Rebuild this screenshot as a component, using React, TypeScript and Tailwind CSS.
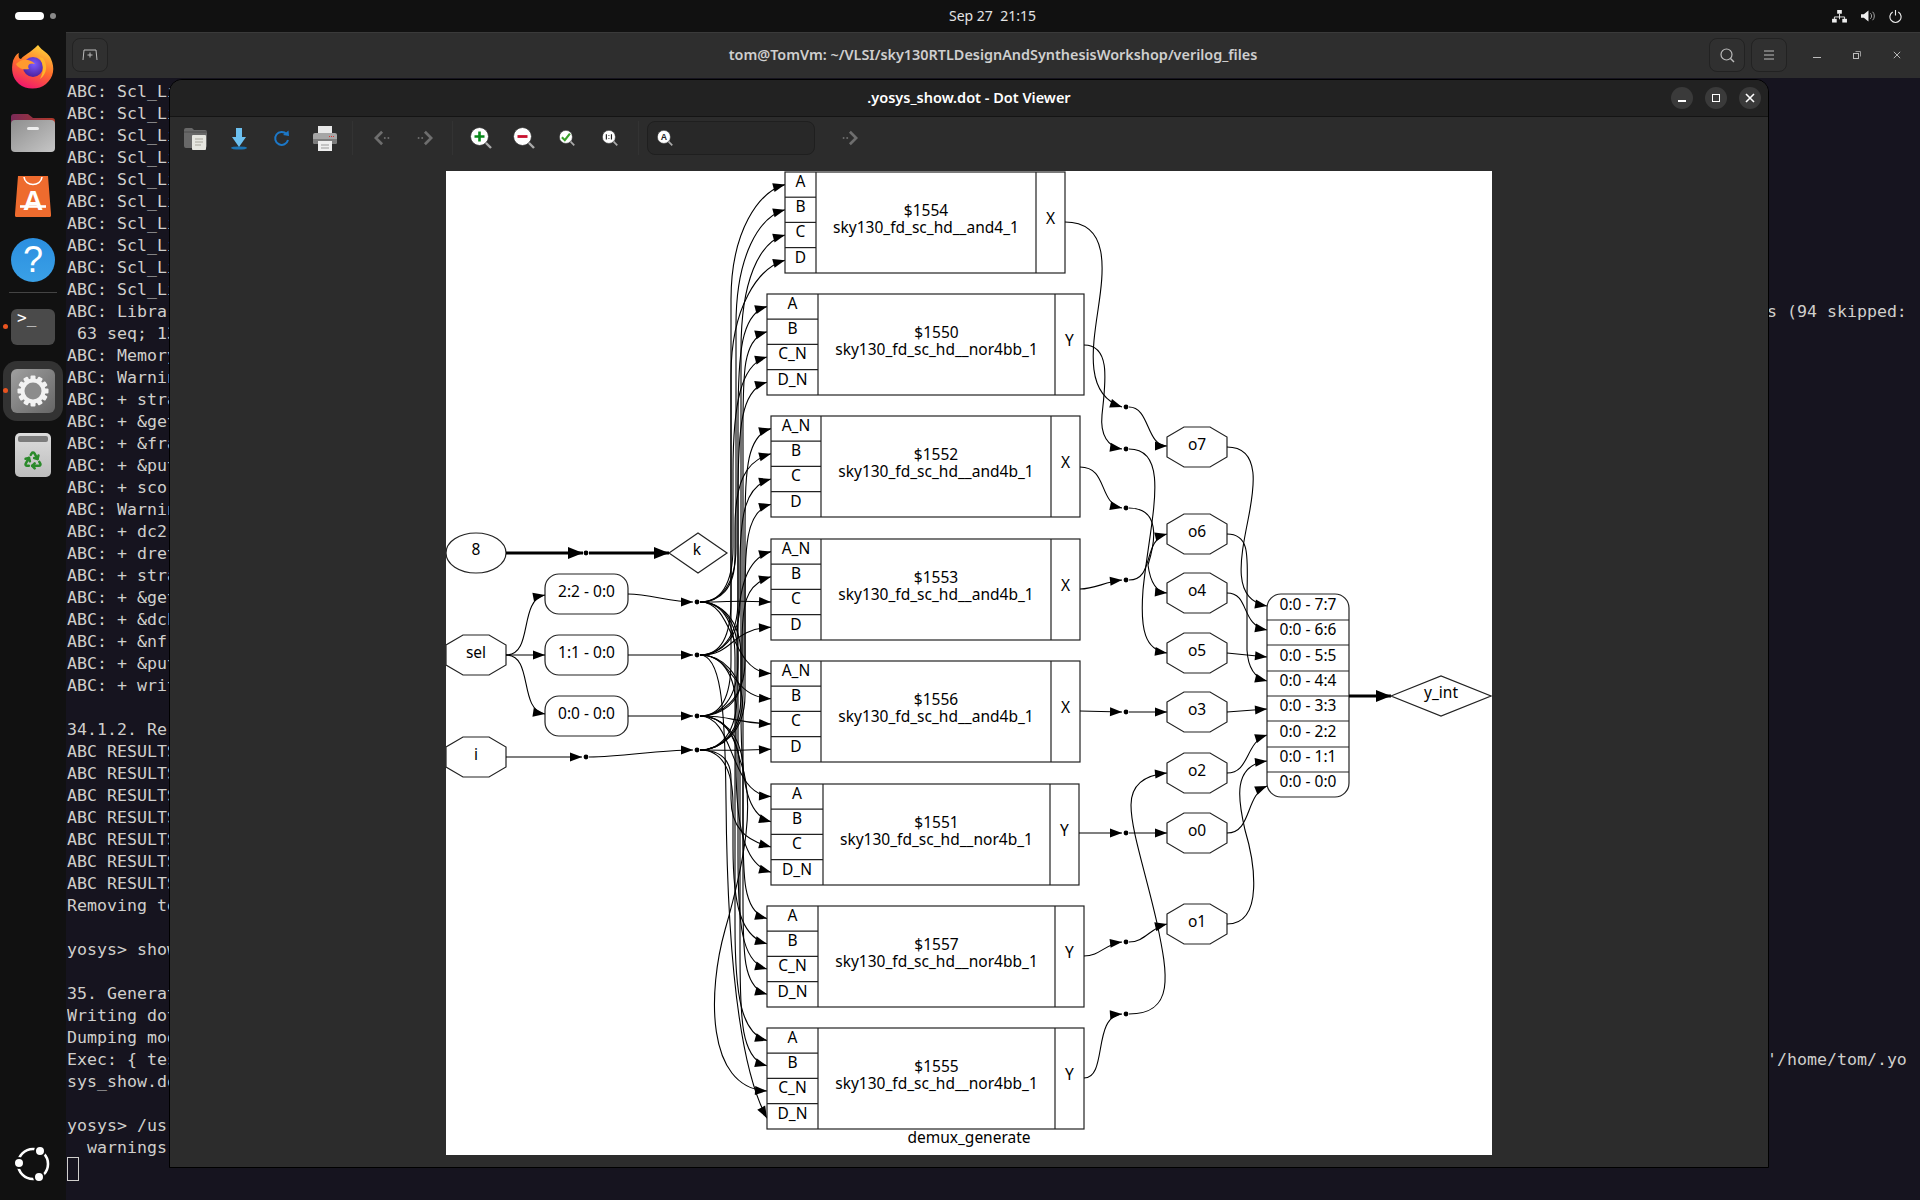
import React from 'react';
import { Recycle } from 'lucide-react';

const mono = { fontFamily: '"DejaVu Sans Mono", monospace' };

// only the part of each line that shows left of the viewer window
const rows = [
  ...Array(10).fill("ABC: Scl_Li"),
  "ABC: Librar",
  " 63 seq; 13",
  "ABC: Memory",
  "ABC: Warnin",
  "ABC: + stra",
  "ABC: + &get",
  "ABC: + &fra",
  "ABC: + &put",
  "ABC: + scor",
  "ABC: Warnin",
  "ABC: + dc2",
  "ABC: + dret",
  "ABC: + stra",
  "ABC: + &get",
  "ABC: + &dch",
  "ABC: + &nf",
  "ABC: + &put",
  "ABC: + writ",
  "",
  "34.1.2. Re-",
  "ABC RESULTS",
  "ABC RESULTS",
  "ABC RESULTS",
  "ABC RESULTS",
  "ABC RESULTS",
  "ABC RESULTS",
  "ABC RESULTS",
  "Removing te",
  "",
  "yosys> show",
  "",
  "35. Generat",
  "Writing dot",
  "Dumping mod",
  "Exec: { tes",
  "sys_show.do",
  "",
  "yosys> /usr",
  "  warnings.",
];

// tails of the long lines, right of the viewer window
const tails: Record<number, string> = {
  10: "s (94 skipped:",
  44: "'/home/tom/.yo",
};

type Box = { id: string; cell: string; x0: number; x1: number; x2: number; x3: number; top: number; ports: string[]; out: string; src: number[] };

const boxes: Box[] = [
  { id: "$1554", cell: "sky130_fd_sc_hd__and4_1", x0: 785, x1: 816, x2: 1036, x3: 1065, top: 172, ports: ["A", "B", "C", "D"], out: "X", src: [1, 0, 3, 2] },
  { id: "$1550", cell: "sky130_fd_sc_hd__nor4bb_1", x0: 767, x1: 818, x2: 1055, x3: 1084, top: 294, ports: ["A", "B", "C_N", "D_N"], out: "Y", src: [2, 3, 0, 1] },
  { id: "$1552", cell: "sky130_fd_sc_hd__and4b_1", x0: 771, x1: 821, x2: 1051, x3: 1080, top: 416, ports: ["A_N", "B", "C", "D"], out: "X", src: [3, 0, 1, 2] },
  { id: "$1553", cell: "sky130_fd_sc_hd__and4b_1", x0: 771, x1: 821, x2: 1051, x3: 1080, top: 539, ports: ["A_N", "B", "C", "D"], out: "X", src: [3, 2, 0, 1] },
  { id: "$1556", cell: "sky130_fd_sc_hd__and4b_1", x0: 771, x1: 821, x2: 1051, x3: 1080, top: 661, ports: ["A_N", "B", "C", "D"], out: "X", src: [0, 1, 2, 3] },
  { id: "$1551", cell: "sky130_fd_sc_hd__nor4b_1", x0: 771, x1: 823, x2: 1050, x3: 1079, top: 784, ports: ["A", "B", "C", "D_N"], out: "Y", src: [2, 0, 3, 1] },
  { id: "$1557", cell: "sky130_fd_sc_hd__nor4bb_1", x0: 767, x1: 818, x2: 1055, x3: 1084, top: 906, ports: ["A", "B", "C_N", "D_N"], out: "Y", src: [1, 3, 0, 2] },
  { id: "$1555", cell: "sky130_fd_sc_hd__nor4bb_1", x0: 767, x1: 818, x2: 1055, x3: 1084, top: 1028, ports: ["A", "B", "C_N", "D_N"], out: "Y", src: [0, 2, 1, 3] },
];

const dots = [602, 655, 716, 750];

// route from a fan-out dot through the vertical bundle to a port
function busPath(sy: number, tx: number, ty: number, cx: number) {
  const d = ty - sy;
  const dir = d < 0 ? -1 : 1;
  if (Math.abs(d) < 90) return `M700,${sy} C735,${sy} ${tx - 42},${ty - dir * 2} ${tx},${ty}`;
  const h = Math.min(115, Math.abs(d) * 0.5);
  const s = Math.min(55, Math.abs(d) * 0.3);
  return `M700,${sy} C720,${sy} ${cx},${sy + dir * s * 0.3} ${cx},${sy + dir * s} L${cx},${ty - dir * h} C${cx},${ty - dir * h * 0.4} ${tx - 26},${ty - dir * 7} ${tx},${ty}`;
}

const Edge = ({ d, w = 1.1 }: { d: string; w?: number }) => {
  const n = d.match(/-?[\d.]+/g)!.map(Number);
  const [px, py, x, y] = n.slice(-4);
  const len = Math.hypot(x - px, y - py) || 1;
  const ux = (x - px) / len;
  const uy = (y - py) / len;
  const L = w > 2 ? 15 : 12;
  const W = w > 2 ? 6 : 4.5;
  const bx = x - ux * L;
  const by = y - uy * L;
  return (
    <g>
      <path d={d} fill="none" stroke="#000" strokeWidth={w} />
      <polygon points={`${x},${y} ${bx - uy * W},${by + ux * W} ${bx + uy * W},${by - ux * W}`} fill="#000" />
    </g>
  );
};

const Octagon = ({ x, cy, label }: { x: number; cy: number; label: string }) => (
  <g>
    <polygon
      points={`${x},${cy - 10} ${x + 17},${cy - 20} ${x + 43},${cy - 20} ${x + 60},${cy - 10} ${x + 60},${cy + 10} ${x + 43},${cy + 20} ${x + 17},${cy + 20} ${x},${cy + 10}`}
      fill="#fff"
      stroke="#222"
      strokeWidth="1.2"
    />
    <text x={x + 30} y={cy + 2.5} textAnchor="middle">{label}</text>
  </g>
);

const Rounded = ({ cy, label }: { cy: number; label: string }) => (
  <g>
    <rect x="545" y={cy - 20} width="83" height="40" rx="14" fill="#fff" stroke="#222" strokeWidth="1.2" />
    <text x="586.5" y={cy + 2.5} textAnchor="middle">{label}</text>
  </g>
);

const Dot = ({ x, y }: { x: number; y: number }) => <circle cx={x} cy={y} r="2.4" fill="#000" />;

const recLabels = ["0:0 - 7:7", "0:0 - 6:6", "0:0 - 5:5", "0:0 - 4:4", "0:0 - 3:3", "0:0 - 2:2", "0:0 - 1:1", "0:0 - 0:0"];
const recLines = [620, 645, 671, 696, 721, 747, 772];

const Graph = () => (
  <svg viewBox="446 171 1046 984" className="block w-[1046px] h-[984px]" style={{ fontFamily: '"Noto Sans", sans-serif', fontSize: 15.5 }}>
    {/* left inputs */}
    <ellipse cx="476" cy="553" rx="30" ry="20" fill="#fff" stroke="#222" strokeWidth="1.2" />
    <text x="476" y="554.5" textAnchor="middle">8</text>
    <polygon points="669,553 698,533 727,553 698,573" fill="#fff" stroke="#222" strokeWidth="1.2" />
    <text x="697" y="554.5" textAnchor="middle">k</text>
    <Edge d="M506,553 L583,553" w={3.2} />
    <Edge d="M589,553 L669,553" w={3.2} />
    <Dot x={586} y={553} />
    <Octagon x={446} cy={655} label="sel" />
    <Octagon x={446} cy={757} label="i" />
    <Rounded cy={594} label="2:2 - 0:0" />
    <Rounded cy={655} label="1:1 - 0:0" />
    <Rounded cy={716} label="0:0 - 0:0" />
    <Edge d="M506,655 C534,655 518,600 545,595" />
    <Edge d="M506,655 L545,655" />
    <Edge d="M506,655 C534,655 518,710 545,714" />
    <Edge d="M628,594 C650,594 670,602 693,602" />
    <Edge d="M628,655 L693,655" />
    <Edge d="M628,716 L693,716" />
    <Edge d="M506,757 L582,757" />
    <Dot x={586} y={757} />
    <Edge d="M589,757 C625,757 655,750 693,750" />
    {dots.map((y) => <Dot key={y} x={697} y={y} />)}

    {/* fan-out bundle */}
    {boxes.map((b, i) =>
      b.ports.map((p, j) => {
        const ty = b.top + 12.6 + j * 25.2;
        const cx = 731 + ((i * 7 + j * 5) % 15);
        if (b.id === "$1555" && p === "C_N")
          return <Edge key={p + i} d={`M700,716 C722,716 733,730 740,760 C756,800 745,860 725,930 C708,990 705,1088 767,${ty}`} />;
        if (b.id === "$1555" && p === "D_N")
          return <Edge key={p + i} d={`M700,655 C720,655 725,700 726,800 C727,920 735,1060 767,${ty + 2}`} />;
        return <Edge key={p + i} d={busPath(dots[b.src[j]], b.x0, ty, cx)} />;
      })
    )}

    {/* cells */}
    {boxes.map((b) => (
      <g key={b.id}>
        <rect x={b.x0} y={b.top} width={b.x3 - b.x0} height={101} fill="#fff" stroke="#222" strokeWidth="1.2" />
        <path d={`M${b.x1},${b.top} V${b.top + 101} M${b.x2},${b.top} V${b.top + 101}`} stroke="#222" strokeWidth="1.2" />
        {[1, 2, 3].map((k) => (
          <path key={k} d={`M${b.x0},${b.top + k * 25.2} H${b.x1}`} stroke="#222" strokeWidth="1.2" />
        ))}
        {b.ports.map((p, j) => (
          <text key={p} x={(b.x0 + b.x1) / 2} y={b.top + 15 + j * 25.2} textAnchor="middle">{p}</text>
        ))}
        <text x={(b.x1 + b.x2) / 2} y={b.top + 44} textAnchor="middle">{b.id}</text>
        <text x={(b.x1 + b.x2) / 2} y={b.top + 61} textAnchor="middle">{b.cell}</text>
        <text x={(b.x2 + b.x3) / 2} y={b.top + 52} textAnchor="middle">{b.out}</text>
      </g>
    ))}
    <text x="969" y="1143" textAnchor="middle">demux_generate</text>

    {/* outputs of the cells */}
    <Edge d="M1065,222 C1110,222 1104,270 1098,310 C1092,350 1085,395 1122,407" />
    <Edge d="M1084,345 C1112,345 1105,385 1102,415 C1100,435 1108,447 1122,449" />
    <Edge d="M1080,467 C1108,467 1098,503 1122,508" />
    <Edge d="M1080,589 C1095,589 1104,582 1122,580" />
    <Edge d="M1080,711 L1122,712" />
    <Edge d="M1079,833 L1122,833" />
    <Edge d="M1084,956 C1100,956 1105,944 1122,942" />
    <Edge d="M1084,1078 C1108,1078 1092,1016 1122,1014" />
    {[407, 449, 508, 580, 712, 833, 942, 1014].map((y) => <Dot key={y} x={1126} y={y} />)}
    <Edge d="M1129,407 C1150,407 1146,446 1167,446" />
    <Edge d="M1129,449 C1172,449 1150,520 1143,590 C1140,630 1145,650 1167,653" />
    <Edge d="M1129,508 C1160,508 1156,540 1148,565 C1150,580 1155,592 1167,593" />
    <Edge d="M1129,580 C1155,580 1142,540 1167,534" />
    <Edge d="M1129,712 L1167,712" />
    <Edge d="M1129,833 L1167,833" />
    <Edge d="M1129,942 C1145,942 1150,928 1167,924" />
    <Edge d="M1129,1014 C1175,1014 1168,975 1157,923 C1145,870 1131,830 1131,805 C1131,785 1145,775 1167,773" />
    <Octagon x={1167} cy={447} label="o7" />
    <Octagon x={1167} cy={534} label="o6" />
    <Octagon x={1167} cy={593} label="o4" />
    <Octagon x={1167} cy={653} label="o5" />
    <Octagon x={1167} cy={712} label="o3" />
    <Octagon x={1167} cy={773} label="o2" />
    <Octagon x={1167} cy={833} label="o0" />
    <Octagon x={1167} cy={924} label="o1" />

    {/* into the output record */}
    <Edge d="M1227,447 C1262,447 1254,490 1248,520 C1240,560 1232,600 1267,606" />
    <Edge d="M1227,593 C1250,593 1240,625 1267,630" />
    <Edge d="M1227,534 C1252,534 1247,560 1247,600 L1247,650 C1248,668 1255,678 1267,681" />
    <Edge d="M1227,653 L1267,657" />
    <Edge d="M1227,712 L1267,709" />
    <Edge d="M1227,773 C1250,773 1245,742 1267,735" />
    <Edge d="M1227,833 C1252,833 1245,795 1267,786" />
    <Edge d="M1227,924 C1265,924 1254,860 1245,830 C1238,800 1232,765 1267,761" />
    <rect x="1267" y="594" width="82" height="203" rx="14" fill="#fff" stroke="#222" strokeWidth="1.2" />
    {recLines.map((y) => <path key={y} d={`M1267,${y} H1349`} stroke="#222" strokeWidth="1.2" />)}
    {recLabels.map((t, i) => (
      <text key={t} x="1308" y={610 + i * 25.35} textAnchor="middle">{t}</text>
    ))}
    <Edge d="M1349,696 L1391,696" w={3.2} />
    <polygon points="1391,696 1441,676 1491,696 1441,716" fill="#fff" stroke="#222" strokeWidth="1.2" />
    <text x="1441" y="698" textAnchor="middle">y_int</text>
  </svg>
);

const Firefox = () => (
  <svg width="44" height="46" viewBox="0 0 44 46">
    <defs>
      <linearGradient id="ffa" x1="0.7" y1="0" x2="0.3" y2="1">
        <stop offset="0" stopColor="#ffd43a" />
        <stop offset="0.5" stopColor="#ff6f2c" />
        <stop offset="1" stopColor="#f0136f" />
      </linearGradient>
      <radialGradient id="ffb" cx="0.55" cy="0.35" r="0.7">
        <stop offset="0" stopColor="#7b5bff" />
        <stop offset="1" stopColor="#4a1d96" />
      </radialGradient>
    </defs>
    <path d="M27 1 C31 7 38 9 40 15 C44 24 43 33 35 40 C28 46 15 46 8 40 C1 34 0 25 2 17 C3 14 5 10 8 9 C7 12 8 15 10 15 C13 11 19 9 27 1Z" fill="url(#ffa)" />
    <circle cx="22" cy="23" r="10" fill="url(#ffb)" />
    <path d="M5 20 C10 15 18 14 24 20 C18 18 16 22 18 25 C11 26 7 24 5 20Z" fill="#ff9a2e" />
    <path d="M32 14 C37 21 36 30 29 35 C33 28 33 20 28 13Z" fill="#ffb52c" />
  </svg>
);

const FilesIcon = () => (
  <svg width="46" height="42" viewBox="0 0 46 42">
    <defs>
      <linearGradient id="fold" x1="0" y1="0" x2="1" y2="1">
        <stop offset="0" stopColor="#8e8e8e" />
        <stop offset="1" stopColor="#c6c6c6" />
      </linearGradient>
      <linearGradient id="tab" x1="0" y1="0" x2="1" y2="0">
        <stop offset="0" stopColor="#7a2a58" />
        <stop offset="1" stopColor="#b23a2a" />
      </linearGradient>
    </defs>
    <path d="M1 6 a3 3 0 0 1 3-3 h14 l5 4 h19 a3 3 0 0 1 3 3 v10 h-44z" fill="url(#tab)" />
    <rect x="1" y="9" width="44" height="32" rx="4" fill="url(#fold)" />
    <rect x="17" y="16" width="12" height="3" rx="1.5" fill="#eee" />
  </svg>
);

const StoreIcon = () => (
  <svg width="36" height="42" viewBox="0 0 36 42">
    <path d="M3 1 H33 L36 39 a2 2 0 0 1-2 3 H2 a2 2 0 0 1-2-3Z" fill="#ee6b2e" />
    <path d="M9 2 C10 12 26 12 27 2" fill="none" stroke="#fff" strokeWidth="1.6" />
    <text x="18" y="35" textAnchor="middle" fill="#fff" fontSize="28" fontWeight="700" fontFamily='"Liberation Sans", sans-serif'>A</text>
    <path d="M5 31.5 H31" stroke="#fff" strokeWidth="2.6" />
  </svg>
);

const HelpIcon = () => (
  <div className="w-[44px] h-[44px] rounded-full bg-gradient-to-b from-[#2b8fe0] to-[#3aa0e6] flex items-center justify-center text-white text-[36px] leading-none" style={{ fontFamily: '"Liberation Sans", sans-serif' }}>
    ?
  </div>
);

const GearIcon = () => (
  <svg width="32" height="32" viewBox="0 0 32 32">
    {Array.from({ length: 12 }).map((_, i) => (
      <rect key={i} x="13.5" y="0.5" width="5" height="6" rx="1" fill="#f2f2f2" transform={`rotate(${i * 30} 16 16)`} />
    ))}
    <circle cx="16" cy="16" r="12.5" fill="#f2f2f2" />
    <circle cx="16" cy="16" r="8.5" fill="#8c8c8c" />
  </svg>
);

const UbuntuLogo = () => (
  <svg width="38" height="38" viewBox="0 0 38 38">
    <circle cx="19" cy="19" r="15" fill="none" stroke="#fff" strokeWidth="2.6" />
    <circle cx="5" cy="18" r="5" fill="#fff" stroke="#111" strokeWidth="2" />
    <circle cx="26" cy="6" r="5" fill="#fff" stroke="#111" strokeWidth="2" />
    <circle cx="25" cy="32" r="5" fill="#fff" stroke="#111" strokeWidth="2" />
  </svg>
);

const Dock = () => (
  <div className="relative w-[66px] shrink-0 bg-[#111111] flex flex-col items-center pt-[12px]">
    <Firefox />
    <div className="mt-[21px]"><FilesIcon /></div>
    <div className="mt-[22px]"><StoreIcon /></div>
    <div className="mt-[21px]"><HelpIcon /></div>
    <div className="mt-[10px] w-[48px] h-px bg-[#444444]" />
    <div className="mt-[16px] w-[44px] h-[36px] rounded-[6px] bg-[#4a4a4a] text-white text-[16px] leading-[16px] pl-[6px] pt-[1px]" style={mono}>
      &gt;_
    </div>
    <div className="mt-[16px] w-[60px] h-[60px] rounded-[14px] bg-[#333333] flex items-center justify-center">
      <div className="w-[44px] h-[44px] rounded-[6px] bg-gradient-to-br from-[#a0a0a0] to-[#666666] flex items-center justify-center">
        <GearIcon />
      </div>
    </div>
    <div className="mt-[12px] w-[36px] h-[44px] rounded-[5px] bg-gradient-to-b from-[#dddddd] to-[#bdbdbd] pt-[3px] px-[3px]">
      <div className="h-[6px] rounded-[2px] bg-[#7c7c7c]" />
      <div className="flex justify-center mt-[8px]"><Recycle size={20} color="#2a8a2a" strokeWidth={3} /></div>
    </div>
    <div className="absolute left-[3px] top-[292px] w-[5px] h-[5px] rounded-full bg-[#e95420]" />
    <div className="absolute left-[3px] top-[356px] w-[5px] h-[5px] rounded-full bg-[#e95420]" />
    <div className="mt-auto mb-[17px]"><UbuntuLogo /></div>
  </div>
);

const HeaderButton = ({ children }: { children: React.ReactNode }) => (
  <div className="w-[36px] h-[34px] rounded-[8px] border border-[#222222] bg-[#303030] flex items-center justify-center">{children}</div>
);

const ToolButton = ({ children }: { children: React.ReactNode }) => (
  <div className="w-[43px] h-[34px] flex items-center justify-center">{children}</div>
);

const Sep = ({ ml }: { ml: string }) => <div className={`${ml} w-px h-[34px] bg-[#333333]`} />;

const Glass = ({ size, children }: { size: number; children: React.ReactNode }) => (
  <svg width={size} height={size} viewBox="0 0 22 22">
    <path d="M15 15 L21 21" stroke="#aaa" strokeWidth="2.4" />
    <circle cx="9.5" cy="9.5" r="9" fill="#fff" stroke="#333" strokeWidth="0.8" />
    {children}
  </svg>
);

const Arrow = ({ dir }: { dir: 'l' | 'r' }) => (
  <svg width="18" height="18" viewBox="0 0 20 18">
    {dir === 'l' ? (
      <g fill="#6e6e6e">
        <path d="M9 2 L2 9 L9 16" fill="none" stroke="#6e6e6e" strokeWidth="3" />
        <circle cx="12" cy="9" r="1.1" />
        <circle cx="16" cy="9" r="1.1" />
      </g>
    ) : (
      <g fill="#6e6e6e">
        <path d="M11 2 L18 9 L11 16" fill="none" stroke="#6e6e6e" strokeWidth="3" />
        <circle cx="8" cy="9" r="1.1" />
        <circle cx="4" cy="9" r="1.1" />
      </g>
    )}
  </svg>
);

const Toolbar = () => (
  <div className="h-[54px] bg-[#2c2c2c] border-t border-[#141414] flex items-start pl-[4px] pt-[4px] shrink-0">
    <ToolButton>
      <svg width="23" height="23" viewBox="0 0 23 23">
        <path d="M0 3 a2 2 0 0 1 2-2 h6 l2 2 h11 a2 2 0 0 1 2 2 v14 a2 2 0 0 1-2 2 h-19 a2 2 0 0 1-2-2z" fill="#686868" />
        <path d="M0 5 H23" stroke="#4c4c4c" />
        <rect x="8" y="8" width="14" height="15" rx="1" fill="#e6e6e0" />
        <path d="M11 12 h8 M11 15 h8 M11 18 h6" stroke="#a8a69c" strokeWidth="1" />
      </svg>
    </ToolButton>
    <ToolButton>
      <svg width="18" height="23" viewBox="0 0 18 23">
        <ellipse cx="9" cy="21" rx="8" ry="1.6" fill="#1c74b4" />
        <path d="M6 1 h6 v9 h4 l-7 10 l-7-10 h4z" fill="#6cc0f0" />
      </svg>
    </ToolButton>
    <ToolButton>
      <svg width="17" height="17" viewBox="0 0 17 17">
        <path d="M13.5 4 A6.5 6.5 0 1 0 15 10" fill="none" stroke="#1c78c8" strokeWidth="2" />
        <path d="M10 5 L16 6 L15.5 0.5Z" fill="#1c78c8" />
      </svg>
    </ToolButton>
    <ToolButton>
      <svg width="24" height="25" viewBox="0 0 24 25">
        <rect x="5" y="0" width="14" height="9" fill="#e8e8e8" />
        <rect x="0" y="7" width="24" height="11" rx="2" fill="#a6a6a6" />
        <path d="M0 13 h24 v3 a2 2 0 0 1-2 2 h-20 a2 2 0 0 1-2-2z" fill="#7c7c7c" />
        <rect x="5" y="15" width="14" height="10" fill="#eeeeee" />
        <path d="M8 19 h8 M8 22 h8" stroke="#999" />
        <path d="M16 10.5 h1 M18 10.5 h1 M20 10.5 h1" stroke="#d33" />
      </svg>
    </ToolButton>
    <Sep ml="ml-[6px]" />
    <div className="ml-2"><ToolButton><Arrow dir="l" /></ToolButton></div>
    <div className="-ml-[2px] mr-[2px]"><ToolButton><Arrow dir="r" /></ToolButton></div>
    <Sep ml="ml-[5px]" />
    <div className="ml-[6px]">
      <ToolButton>
        <Glass size={22}>
          <path d="M9.5 4.5 v10 M4.5 9.5 h10" stroke="#0a8a1c" strokeWidth="2.6" />
        </Glass>
      </ToolButton>
    </div>
    <ToolButton>
      <Glass size={22}>
        <path d="M4.5 9.5 h10" stroke="#c8102e" strokeWidth="2.8" />
      </Glass>
    </ToolButton>
    <ToolButton>
      <Glass size={16}>
        <path d="M4 10 L8 14 L15 5" fill="none" stroke="#3aa02a" strokeWidth="3" />
      </Glass>
    </ToolButton>
    <ToolButton>
      <Glass size={16}>
        <path d="M6 6 v7 M13 6 v7 M9.5 7 v1 M9.5 11 v1" stroke="#222" strokeWidth="1.6" />
      </Glass>
    </ToolButton>
    <Sep ml="ml-[7px]" />
    <div className="ml-2 w-[168px] h-[34px] rounded-[8px] bg-[#282828] border border-[#1f1f1f] flex items-center pl-[9px]">
      <Glass size={16}>
        <text x="9.5" y="14" textAnchor="middle" fontSize="12" fontWeight="700" fill="#222" fontFamily='"Liberation Sans", sans-serif'>A</text>
      </Glass>
    </div>
    <div className="ml-[12px]"><ToolButton><Arrow dir="r" /></ToolButton></div>
  </div>
);

const CircleBtn = ({ children }: { children: React.ReactNode }) => (
  <div className="w-[22px] h-[22px] rounded-full bg-[#3a3a3a] flex items-center justify-center">{children}</div>
);

const DotViewer = () => (
  <div className="absolute left-[170px] top-[80px] w-[1598px] h-[1087px] rounded-t-[12px] bg-[#2c2c2c] flex flex-col outline outline-1 outline-black">
    <div className="relative h-[36px] shrink-0 rounded-t-[12px] bg-[#222222] flex items-center justify-center">
      <span className="text-white text-[14.5px] font-semibold" style={{ fontFamily: '"Noto Sans", sans-serif' }}>.yosys_show.dot - Dot Viewer</span>
      <div className="absolute right-[7px] top-[7px] flex gap-3">
        <CircleBtn>
          <div className="w-[8px] h-[2px] bg-white mt-[6px]" />
        </CircleBtn>
        <CircleBtn>
          <div className="w-[8px] h-[8px] border-[1.5px] border-white" />
        </CircleBtn>
        <CircleBtn>
          <svg width="10" height="10" viewBox="0 0 10 10"><path d="M1 1 L9 9 M9 1 L1 9" stroke="#fff" strokeWidth="1.6" /></svg>
        </CircleBtn>
      </div>
    </div>
    <Toolbar />
    <div className="ml-[276px] mt-px w-[1046px] h-[984px] bg-white">
      <Graph />
    </div>
  </div>
);

export default function App() {
  return (
    <div className="relative w-[1920px] h-[1200px] overflow-hidden bg-[#111111] flex flex-col">
      {/* top bar */}
      <div className="relative h-[32px] shrink-0 bg-[#111111] flex items-center justify-center pl-[65px] pb-[2px]">
        <div className="absolute left-[15px] top-[12px] w-[29px] h-[8px] rounded-full bg-white" />
        <div className="absolute left-[50px] top-[13px] w-[6px] h-[6px] rounded-full bg-[#8a8a8a]" />
        <span className="text-[#e4e4e4] text-[14px] whitespace-pre" style={{ fontFamily: '"Noto Sans", sans-serif' }}>Sep 27  21:15</span>
        <div className="absolute right-[18px] top-[9px] flex items-center gap-[14px]">
          <svg width="15" height="13" viewBox="0 0 16 14">
            <path d="M8 4 V10 M2.5 10 V7.5 H13.5 V10" fill="none" stroke="#eee" strokeWidth="1" />
            <rect x="5.5" y="0" width="5" height="4" fill="#eee" />
            <rect x="0" y="9.5" width="5" height="4" fill="#eee" />
            <rect x="11" y="9.5" width="5" height="4" fill="#eee" />
          </svg>
          <svg width="14" height="14" viewBox="0 0 15 14">
            <path d="M0 5 H3 L8 1 V13 L3 9 H0Z" fill="#eee" />
            <path d="M10 4 A4 4 0 0 1 10 10 M12.5 2.5 A6.5 6.5 0 0 1 12.5 11.5" fill="none" stroke="#aaa" />
          </svg>
          <svg width="13" height="13" viewBox="0 0 14 14">
            <path d="M4 2.2 A6 6 0 1 0 10 2.2 M7 0 V6" fill="none" stroke="#eee" strokeWidth="1.2" />
          </svg>
        </div>
      </div>

      <div className="flex flex-1 min-h-0">
        <Dock />
        {/* terminal window */}
        <div className="flex-1 min-w-0 flex flex-col bg-[#16141f]">
          <div className="relative h-[46px] shrink-0 bg-[#2e2e2e] border-t border-[#3a3a3a] flex items-center justify-center pb-[1px]">
            <div className="absolute left-[6px] top-[5px]">
              <HeaderButton>
                <svg width="16" height="12" viewBox="0 0 16 12">
                  <path d="M1 11 L2 1 H14 L15 11 M8 3.5 V8.5 M5.5 6 H10.5" fill="none" stroke="#bbb" strokeWidth="1" />
                </svg>
              </HeaderButton>
            </div>
            <span className="text-[#cfcfcf] text-[14.4px] font-semibold" style={{ fontFamily: '"Noto Sans", sans-serif' }}>
              tom@TomVm: ~/VLSI/sky130RTLDesignAndSynthesisWorkshop/verilog_files
            </span>
            <div className="absolute right-[133px] top-[5px] flex gap-[6px]">
              <HeaderButton>
                <svg width="15" height="15" viewBox="0 0 15 15">
                  <circle cx="6.5" cy="6.5" r="5.5" fill="none" stroke="#bbb" strokeWidth="1.2" />
                  <path d="M10.5 10.5 L14 14" stroke="#bbb" strokeWidth="1.4" />
                </svg>
              </HeaderButton>
              <HeaderButton>
                <svg width="12" height="10" viewBox="0 0 12 10">
                  <path d="M1 1 H11 M1 5 H11 M1 9 H11" stroke="#bbb" strokeWidth="1" />
                </svg>
              </HeaderButton>
            </div>
            <div className="absolute right-[19px] top-[15px] flex items-center gap-[32px]">
              <svg width="8" height="14" viewBox="0 0 8 14"><path d="M0 9.5 H8" stroke="#bbb" strokeWidth="1" /></svg>
              <svg width="8" height="8" viewBox="0 0 8 8">
                <rect x="0.5" y="2.5" width="5" height="5" fill="none" stroke="#bbb" />
                <path d="M2.5 0.5 H7.5 V5.5" fill="none" stroke="#999" />
              </svg>
              <svg width="8" height="8" viewBox="0 0 10 10"><path d="M1 1 L9 9 M9 1 L1 9" stroke="#bbb" strokeWidth="1.2" /></svg>
            </div>
          </div>
          <div className="flex-1 min-h-0 overflow-hidden pt-[3px] pl-px text-[#d0cfcc] text-[16.6px] leading-[22px]" style={mono}>
            {rows.map((line, i) => (
              <div key={i} className="h-[22px] whitespace-pre flex">
                <span className="w-[103px] shrink-0 overflow-hidden">{line}</span>
                {tails[i] && <span className="ml-[1597px]">{tails[i]}</span>}
              </div>
            ))}
            <div className="w-[12px] h-[24px] -mt-[2px] border border-[#d0cfcc]" />
          </div>
        </div>
      </div>

      <DotViewer />
    </div>
  );
}
